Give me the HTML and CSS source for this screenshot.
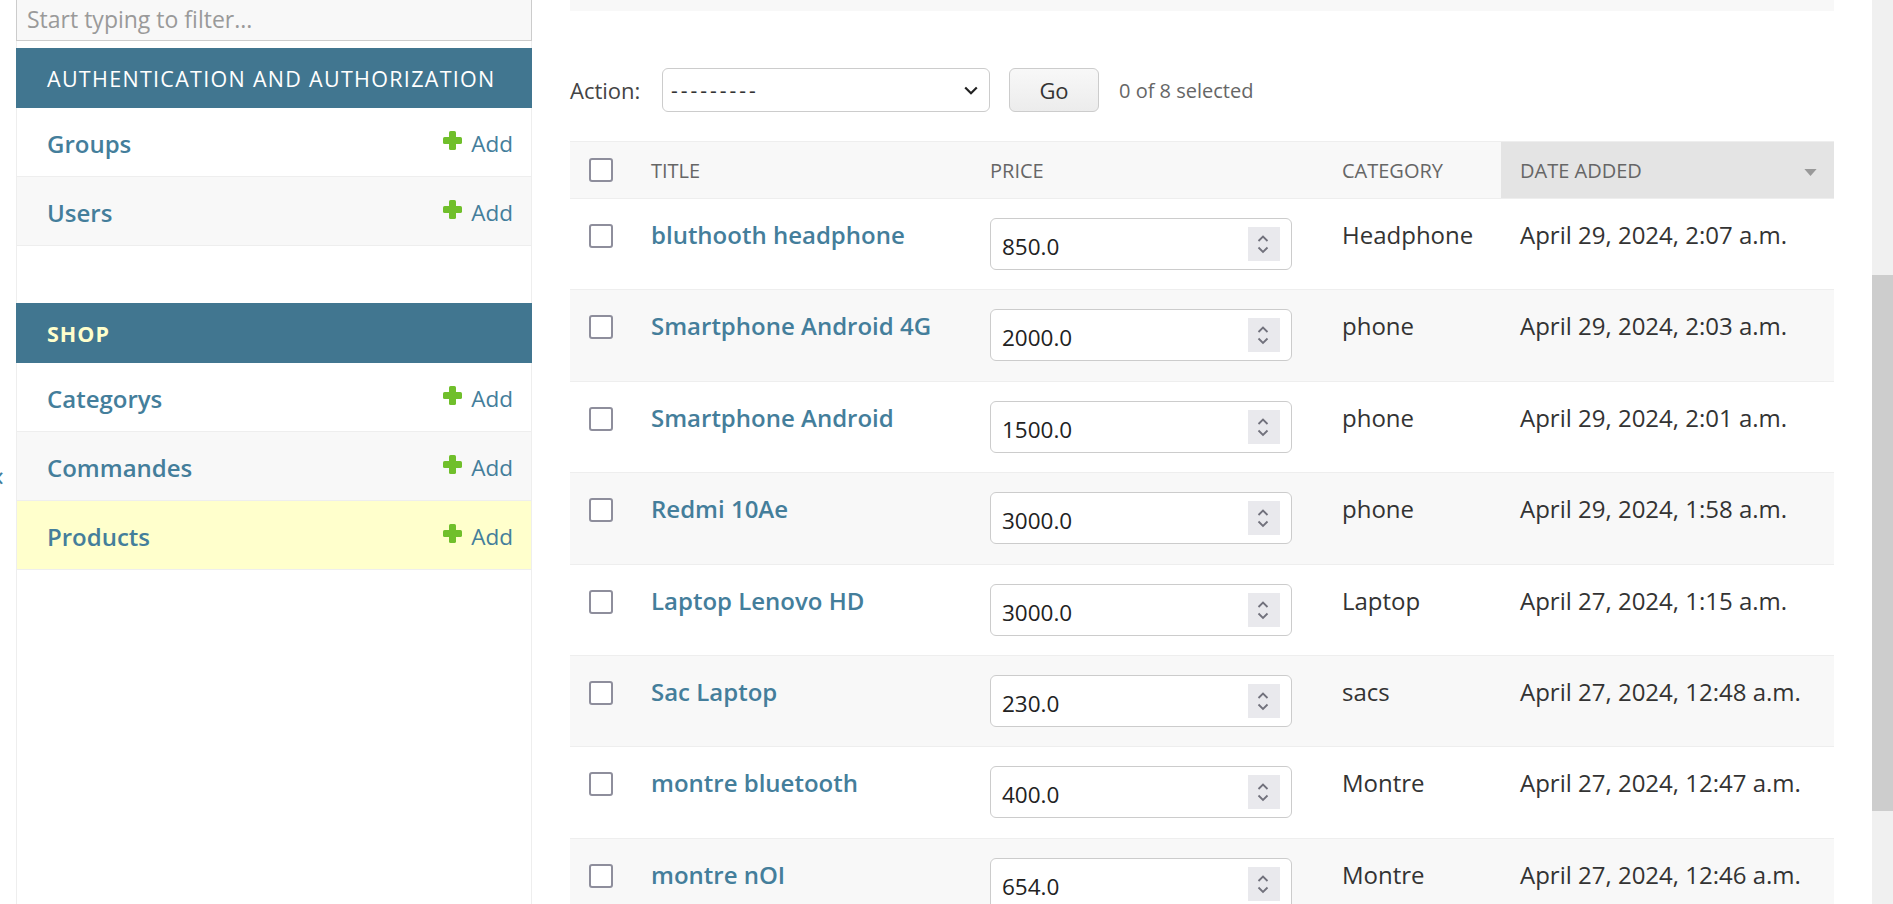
FILE: index.html
```html
<!DOCTYPE html>
<html lang="en">
<head>
<meta charset="utf-8">
<title>Select product to change | Django site admin</title>
<link rel="stylesheet" href="styles.css">
</head>
<body>
<div class="page">
  <span class="toggle-nav">&laquo;</span>
  <nav class="sidebar">
    <input class="nav-filter" type="search" placeholder="Start typing to filter...">
    <div class="module">
      <div class="caption">Authentication and Authorization</div>
      <div class="model-row">
        <a class="model-link">Groups</a>
        <a class="addlink"><svg class="plus" viewBox="0 0 19 19"><rect x="0" y="6" width="19" height="7" rx="1.6"/><rect x="6" y="0" width="7" height="19" rx="1.6"/></svg>Add</a>
      </div>
      <div class="model-row alt">
        <a class="model-link">Users</a>
        <a class="addlink"><svg class="plus" viewBox="0 0 19 19"><rect x="0" y="6" width="19" height="7" rx="1.6"/><rect x="6" y="0" width="7" height="19" rx="1.6"/></svg>Add</a>
      </div>
    </div>
    <div class="module shop">
      <div class="caption current">Shop</div>
      <div class="model-row">
        <a class="model-link">Categorys</a>
        <a class="addlink"><svg class="plus" viewBox="0 0 19 19"><rect x="0" y="6" width="19" height="7" rx="1.6"/><rect x="6" y="0" width="7" height="19" rx="1.6"/></svg>Add</a>
      </div>
      <div class="model-row alt">
        <a class="model-link">Commandes</a>
        <a class="addlink"><svg class="plus" viewBox="0 0 19 19"><rect x="0" y="6" width="19" height="7" rx="1.6"/><rect x="6" y="0" width="7" height="19" rx="1.6"/></svg>Add</a>
      </div>
      <div class="model-row current-model">
        <a class="model-link">Products</a>
        <a class="addlink"><svg class="plus" viewBox="0 0 19 19"><rect x="0" y="6" width="19" height="7" rx="1.6"/><rect x="6" y="0" width="7" height="19" rx="1.6"/></svg>Add</a>
      </div>
    </div>
  </nav>

  <main class="content">
    <div class="toolbar-end"></div>
    <div class="actions">
      <span class="action-label">Action:</span>
      <div class="select">
        <span class="dashes">---------</span>
        <svg class="chev" viewBox="0 0 14 9"><path d="M1.2 1.5 L7 7.2 L12.8 1.5" fill="none" stroke="#222" stroke-width="2.2"/></svg>
      </div>
      <button class="go">Go</button>
      <span class="counter">0 of 8 selected</span>
    </div>

    <table class="results">
      <colgroup>
        <col class="c-check"><col class="c-title"><col class="c-price"><col class="c-cat"><col class="c-date">
      </colgroup>
      <thead>
        <tr>
          <th><span class="cb"></span></th>
          <th>Title</th>
          <th>Price</th>
          <th>Category</th>
          <th class="sorted"><div class="sorted-inner"><span>Date added</span><svg class="sort-arrow" viewBox="0 0 14 8"><path d="M0 0 H14 L7 8 Z" fill="#999"/></svg></div></th>
        </tr>
      </thead>
      <tbody>
        <tr>
          <td class="check"><span class="cb"></span></td>
          <th class="title"><a>bluthooth headphone</a></th>
          <td><div class="num"><span class="val">850.0</span><svg class="spin" viewBox="0 0 32 34"><rect width="32" height="34" fill="#e9e9ed"/><path d="M10.5 14 L15 9.5 L19.5 14 M10.5 20.5 L15 25 L19.5 20.5" fill="none" stroke="#71717c" stroke-width="1.8"/></svg></div></td>
          <td>Headphone</td>
          <td>April 29, 2024, 2:07 a.m.</td>
        </tr>
        <tr>
          <td class="check"><span class="cb"></span></td>
          <th class="title"><a>Smartphone Android 4G</a></th>
          <td><div class="num"><span class="val">2000.0</span><svg class="spin" viewBox="0 0 32 34"><rect width="32" height="34" fill="#e9e9ed"/><path d="M10.5 14 L15 9.5 L19.5 14 M10.5 20.5 L15 25 L19.5 20.5" fill="none" stroke="#71717c" stroke-width="1.8"/></svg></div></td>
          <td>phone</td>
          <td>April 29, 2024, 2:03 a.m.</td>
        </tr>
        <tr>
          <td class="check"><span class="cb"></span></td>
          <th class="title"><a>Smartphone Android</a></th>
          <td><div class="num"><span class="val">1500.0</span><svg class="spin" viewBox="0 0 32 34"><rect width="32" height="34" fill="#e9e9ed"/><path d="M10.5 14 L15 9.5 L19.5 14 M10.5 20.5 L15 25 L19.5 20.5" fill="none" stroke="#71717c" stroke-width="1.8"/></svg></div></td>
          <td>phone</td>
          <td>April 29, 2024, 2:01 a.m.</td>
        </tr>
        <tr>
          <td class="check"><span class="cb"></span></td>
          <th class="title"><a>Redmi 10Ae</a></th>
          <td><div class="num"><span class="val">3000.0</span><svg class="spin" viewBox="0 0 32 34"><rect width="32" height="34" fill="#e9e9ed"/><path d="M10.5 14 L15 9.5 L19.5 14 M10.5 20.5 L15 25 L19.5 20.5" fill="none" stroke="#71717c" stroke-width="1.8"/></svg></div></td>
          <td>phone</td>
          <td>April 29, 2024, 1:58 a.m.</td>
        </tr>
        <tr>
          <td class="check"><span class="cb"></span></td>
          <th class="title"><a>Laptop Lenovo HD</a></th>
          <td><div class="num"><span class="val">3000.0</span><svg class="spin" viewBox="0 0 32 34"><rect width="32" height="34" fill="#e9e9ed"/><path d="M10.5 14 L15 9.5 L19.5 14 M10.5 20.5 L15 25 L19.5 20.5" fill="none" stroke="#71717c" stroke-width="1.8"/></svg></div></td>
          <td>Laptop</td>
          <td>April 27, 2024, 1:15 a.m.</td>
        </tr>
        <tr>
          <td class="check"><span class="cb"></span></td>
          <th class="title"><a>Sac Laptop</a></th>
          <td><div class="num"><span class="val">230.0</span><svg class="spin" viewBox="0 0 32 34"><rect width="32" height="34" fill="#e9e9ed"/><path d="M10.5 14 L15 9.5 L19.5 14 M10.5 20.5 L15 25 L19.5 20.5" fill="none" stroke="#71717c" stroke-width="1.8"/></svg></div></td>
          <td>sacs</td>
          <td>April 27, 2024, 12:48 a.m.</td>
        </tr>
        <tr>
          <td class="check"><span class="cb"></span></td>
          <th class="title"><a>montre bluetooth</a></th>
          <td><div class="num"><span class="val">400.0</span><svg class="spin" viewBox="0 0 32 34"><rect width="32" height="34" fill="#e9e9ed"/><path d="M10.5 14 L15 9.5 L19.5 14 M10.5 20.5 L15 25 L19.5 20.5" fill="none" stroke="#71717c" stroke-width="1.8"/></svg></div></td>
          <td>Montre</td>
          <td>April 27, 2024, 12:47 a.m.</td>
        </tr>
        <tr>
          <td class="check"><span class="cb"></span></td>
          <th class="title"><a>montre nOI</a></th>
          <td><div class="num"><span class="val">654.0</span><svg class="spin" viewBox="0 0 32 34"><rect width="32" height="34" fill="#e9e9ed"/><path d="M10.5 14 L15 9.5 L19.5 14 M10.5 20.5 L15 25 L19.5 20.5" fill="none" stroke="#71717c" stroke-width="1.8"/></svg></div></td>
          <td>Montre</td>
          <td>April 27, 2024, 12:46 a.m.</td>
        </tr>
      </tbody>
    </table>
  </main>

  <div class="scrollbar"><div class="thumb"></div></div>
</div>
</body>
</html>
```

FILE: styles.css
```css
html, body {
  margin: 0;
  padding: 0;
}
body {
  font-family: "Open Sans", "Noto Sans", "DejaVu Sans", sans-serif;
  color: #333;
  background: #fff;
  height: 904px;
  overflow: hidden;
}
a {
  color: #447e9b;
  text-decoration: none;
}

.page {
  position: relative;
  display: flex;
  height: 904px;
}

.toggle-nav {
  position: absolute;
  left: -11px;
  top: 457px;
  font-size: 30px;
  line-height: 36px;
  color: #447e9b;
}

/* ---------- sidebar ---------- */
.sidebar {
  flex: none;
  margin-left: 16px;
  width: 516px;
  box-sizing: border-box;
  border-left: 1px solid #eee;
  border-right: 1px solid #eee;
  height: 904px;
}
.nav-filter {
  display: block;
  box-sizing: border-box;
  width: calc(100% + 2px);
  margin: 0 -1px;
  height: 41px;
  border: 1px solid #ccc;
  border-top: 0;
  background: #f8f8f8;
  padding: 0 0 2px 10px;
  font-family: inherit;
  font-size: 23px;
  color: #333;
  outline: none;
}
.nav-filter::placeholder {
  color: #9a9a9a;
}
.module {
  margin-top: 7px;
}
.module.shop {
  margin-top: 57px;
}
.caption {
  height: 60px;
  margin: 0 -1px;
  box-sizing: border-box;
  background: #417690;
  color: #fff;
  display: flex;
  align-items: center;
  padding-left: 31px;
  font-size: 21.5px;
  letter-spacing: 1.3px;
  text-transform: uppercase;
}
.caption.current {
  color: #ffc;
  font-weight: 700;
  letter-spacing: 1px;
}
.model-row {
  height: 69px;
  box-sizing: border-box;
  border-bottom: 1px solid #eee;
  display: flex;
  align-items: center;
  justify-content: space-between;
  padding: 0 18px 0 30px;
  background: #fff;
}
.model-row.alt {
  background: #f8f8f8;
}
.model-row.current-model {
  background: #ffc;
}
.model-link {
  font-size: 24px;
  font-weight: 600;
  color: #447e9b;
  padding-top: 2px;
}
.addlink {
  display: flex;
  align-items: center;
  font-size: 22.5px;
  color: #447e9b;
  padding-top: 2px;
}
.plus {
  width: 19px;
  height: 19px;
  fill: #70bf2b;
  margin-right: 9px;
  margin-top: -6px;
}

/* ---------- content ---------- */
.content {
  flex: none;
  margin-left: 38px;
  width: 1264px;
}
.toolbar-end {
  height: 11px;
  background: #f8f8f8;
}
.actions {
  margin-top: 57px;
  height: 44px;
  display: flex;
  align-items: center;
}
.action-label {
  font-size: 22px;
  color: #444;
  width: 92px;
}
.select {
  box-sizing: border-box;
  width: 328px;
  height: 44px;
  border: 1px solid #ccc;
  border-radius: 6px;
  background: #fff;
  display: flex;
  align-items: center;
  justify-content: space-between;
  padding: 0 11px 0 8px;
  color: #333;
}
.dashes {
  font-size: 21px;
  letter-spacing: 3px;
}
.chev {
  width: 14px;
  height: 9px;
}
.go {
  margin-left: 19px;
  width: 90px;
  height: 44px;
  box-sizing: border-box;
  border: 1px solid #ccc;
  border-radius: 6px;
  background: linear-gradient(#f8f8f8, #ececec);
  font-family: inherit;
  font-size: 22px;
  color: #333;
  padding: 0;
}
.counter {
  margin-left: 20px;
  font-size: 20px;
  color: #666;
}

/* ---------- table ---------- */
.results {
  margin-top: 29px;
  width: 1264px;
  table-layout: fixed;
  border-collapse: collapse;
}
.c-check { width: 62px; }
.c-title { width: 339px; }
.c-price { width: 352px; }
.c-cat { width: 178px; }
.c-date { width: 333px; }

.results th,
.results td {
  padding: 0 0 0 19px;
  text-align: left;
}
.results thead tr {
  height: 57px;
  background: #f8f8f8;
  border-top: 1px solid #eee;
  border-bottom: 1px solid #eee;
}
.results thead th {
  font-size: 20px;
  font-weight: 400;
  color: #666;
  text-transform: uppercase;
  vertical-align: middle;
  white-space: nowrap;
}
.results thead th.sorted {
  background: #e4e4e4;
}
.sorted-inner {
  display: flex;
  align-items: center;
  justify-content: space-between;
  padding-right: 17px;
}
.sort-arrow {
  width: 13px;
  height: 7px;
  margin-top: 4px;
}
.cb {
  display: block;
  width: 24px;
  height: 24px;
  box-sizing: border-box;
  border: 2.5px solid #8e8e9c;
  border-radius: 3px;
  background: #fff;
}
.results tbody tr {
  height: 91.4px;
  border-bottom: 1px solid #eee;
}
.results tbody tr:nth-child(even) {
  background: #f8f8f8;
}
.results tbody td,
.results tbody th {
  vertical-align: top;
  padding-top: 19px;
  font-size: 24px;
  line-height: 34px;
  color: #333;
  white-space: nowrap;
}
.results tbody td.check {
  padding-top: 25px;
}
.results tbody th.title a {
  font-weight: 600;
  color: #447e9b;
}
.num {
  box-sizing: border-box;
  width: 302px;
  height: 52px;
  border: 1px solid #ccc;
  border-radius: 6px;
  background: #fff;
  display: flex;
  align-items: center;
  justify-content: space-between;
  padding: 0 11px 0 11px;
}
.val {
  font-size: 22.5px;
  color: #222;
  padding-top: 6px;
}
.spin {
  width: 32px;
  height: 34px;
}

/* ---------- scrollbar ---------- */
.scrollbar {
  flex: none;
  margin-left: auto;
  width: 21px;
  height: 904px;
  background: #f0f0f0;
}
.thumb {
  margin-top: 275px;
  height: 536px;
  background: #cdcdcd;
}
```
